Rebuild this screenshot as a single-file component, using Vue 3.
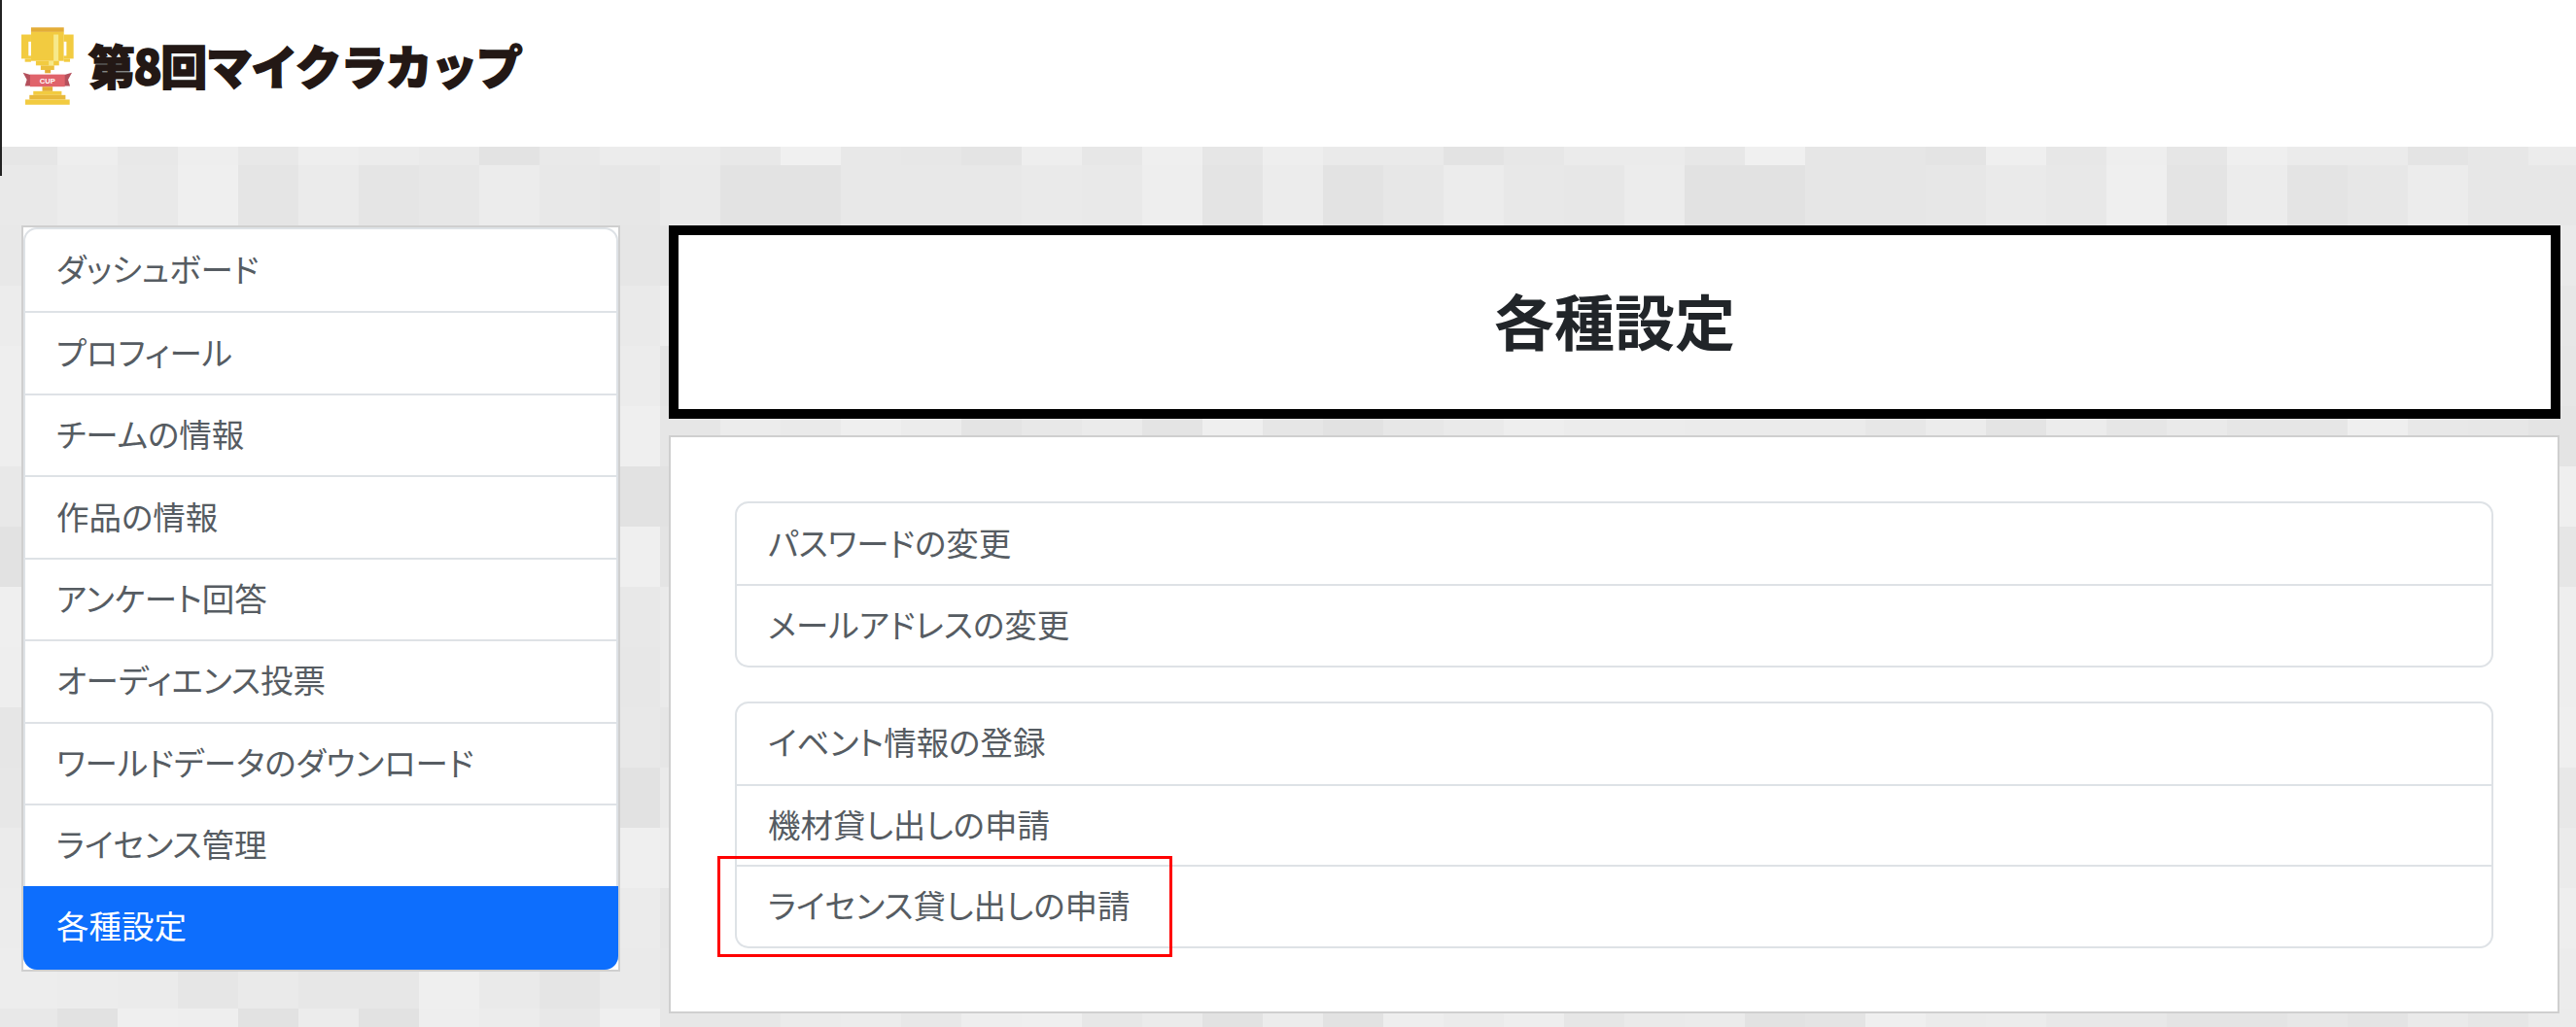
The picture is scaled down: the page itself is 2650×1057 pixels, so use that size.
<template>
  <div class="page">
    <header class="site-header">
      <svg class="trophy" viewBox="35 38 163 240" width="54" height="80">
        <rect x="65" y="38" width="102" height="14" fill="#e3ac37" />
        <rect x="65" y="52" width="102" height="90" fill="#f2cb40" />
        <rect x="80" y="142" width="72" height="14" fill="#f2cb40" />
        <rect x="95" y="156" width="42" height="14" fill="#ecc03c" />
        <rect x="35" y="60" width="30" height="75" fill="#f2cb40" />
        <rect x="167" y="60" width="30" height="75" fill="#f2cb40" />
        <rect x="46" y="135" width="19" height="10" fill="#f2cb40" />
        <rect x="167" y="135" width="19" height="10" fill="#f2cb40" />
        <rect x="57" y="82" width="8" height="44" fill="#fff" />
        <rect x="167" y="82" width="8" height="44" fill="#fff" />
        <rect x="135" y="60" width="15" height="82" fill="#f7e98a" />
        <rect x="120" y="142" width="15" height="14" fill="#f7e98a" />
        <rect x="108" y="170" width="18" height="10" fill="#e3ac37" />
        <polygon points="40,178 66,186 66,220 46,220 52,200" fill="#b4505c" />
        <polygon points="192,178 166,186 166,220 186,220 180,200" fill="#b4505c" />
        <rect x="62" y="184" width="108" height="38" fill="#e0636b" />
        <text x="116" y="211" class="cup-text" text-anchor="middle">CUP</text>
        <rect x="100" y="222" width="32" height="14" fill="#e3ac37" />
        <rect x="72" y="236" width="88" height="12" fill="#f2cb40" />
        <rect x="60" y="248" width="112" height="14" fill="#e8b93b" />
        <rect x="47" y="262" width="138" height="16" fill="#f2cb40" />
      </svg>
      <span class="logo-text">第8回マイクラカップ</span>
    </header>
    <div class="edge-line"></div>

    <main class="main">
      <svg class="mosaic" width="2666" height="992" shape-rendering="crispEdges">
        <template v-for="tile in tiles" :key="tile.key">
          <rect :x="tile.x" :y="tile.y" width="62" height="62" :fill="tile.fill" />
        </template>
      </svg>

      <aside class="sidebar">
        <ul class="list">
          <li
            v-for="item in menu"
            :key="item"
            class="list-item"
            :class="{ active: item === current }"
          >{{ item }}</li>
        </ul>
      </aside>

      <section class="content">
        <div class="title-box">
          <h1 class="title">{{ current }}</h1>
        </div>
        <div class="card">
          <ul v-for="(group, index) in groups" :key="index" class="list">
            <li v-for="item in group" :key="item" class="list-item">{{ item }}</li>
          </ul>
          <!-- annotation on the screenshot -->
          <div class="red-box"></div>
        </div>
      </section>
    </main>
  </div>
</template>

<script setup>
const current = '各種設定'

const menu = [
  'ダッシュボード',
  'プロフィール',
  'チームの情報',
  '作品の情報',
  'アンケート回答',
  'オーディエンス投票',
  'ワールドデータのダウンロード',
  'ライセンス管理',
  '各種設定'
]

const groups = [
  ['パスワードの変更', 'メールアドレスの変更'],
  ['イベント情報の登録', '機材貸し出しの申請', 'ライセンス貸し出しの申請']
]

// grey values of the rows that are really visible, the rest is filled below
const knownRows = {
  0: 'e6 ee e8 ee e8 ee ec ea e3 e9 ec eb e8 f0 e8 e7 e4 ee e7 ef e6 ee ea ea e3 e7 eb eb e7 f0 e6 e6 e4 ef e7 ee e6 ef eb eb e4 e7 ec',
  1: 'e9 ec e9 ef e5 eb e5 e7 ec e8 e7 ea e3 e3 e8 e8 e8 ea e9 ee e4 ec e3 e7 ec e8 e7 ec e2 e2 e6 e6 e7 ea e8 ef e4 ec e4 e7 ec e7 e7',
  13: 'ec e4 ea ea e2 ee ea e5 e4 e6 eb',
  14: 'ed ec eb e6 ea e7 e7 ef ea e5 ea'
}

const greys = ['e2', 'e4', 'e6', 'e7', 'e8', 'ea', 'eb', 'ec', 'ee', 'ef']

const tiles = []
for (let row = 0; row < 16; row++) {
  const known = knownRows[row] ? knownRows[row].split(' ') : []
  for (let col = 0; col < 43; col++) {
    const seed = Math.abs(Math.sin(row * 12.9898 + col * 78.233) * 43758.5453)
    const grey = known[col] || greys[Math.floor(seed) % greys.length]
    tiles.push({
      key: row + '-' + col,
      x: col * 62,
      y: row * 62,
      fill: '#' + grey + grey + grey
    })
  }
}
</script>

<style scoped>
.page {
  position: relative;
  height: 100vh;
  overflow: hidden;
  display: flex;
  flex-direction: column;
  background: #e8e8e8;
  font-family: "Noto Sans CJK JP", "Liberation Sans", sans-serif;
  color: #565c62;
}

.site-header {
  flex: none;
  height: 151px;
  box-sizing: border-box;
  padding: 28px 0 0 22px;
  background: #fff;
  display: flex;
  align-items: flex-start;
  position: relative;
  z-index: 2;
}

.trophy {
  flex: none;
}

.cup-text {
  font-family: "Liberation Sans", sans-serif;
  font-size: 23px;
  font-weight: 700;
  fill: #fff;
}

.logo-text {
  margin: 8px 0 0 15px;
  font-size: 48px;
  line-height: 60px;
  font-weight: 900;
  letter-spacing: -1.5px;
  color: #231815;
  -webkit-text-stroke: 1.5px #231815;
  white-space: nowrap;
}

.edge-line {
  position: absolute;
  left: 0;
  top: 0;
  width: 2px;
  height: 181px;
  background: #222;
  z-index: 3;
}

.main {
  position: relative;
  flex: 1;
  display: flex;
  align-items: flex-start;
  gap: 50px;
  padding: 81px 16px 0 22px;
}

.mosaic {
  position: absolute;
  left: -3.5px;
  top: -43px;
}

.sidebar {
  position: relative;
  flex: none;
  width: 616px;
  box-sizing: border-box;
  border: 2px solid #cfcfcf;
  background: #fff;
}

.list {
  margin: 0;
  padding: 0;
  list-style: none;
  background: #fff;
  border: 2px solid #dee2e6;
  border-radius: 14px;
}

.list-item {
  box-sizing: border-box;
  height: 84.44px;
  padding: 0 32px 5px;
  display: flex;
  align-items: center;
  font-size: 33.5px;
  font-feature-settings: "palt";
  border-top: 2px solid #dee2e6;
}

.list-item:first-child {
  border-top: none;
}

.list-item.active {
  height: 86.44px;
  margin: 0 -2px -2px;
  padding: 0 34px 7px;
  background: #0d6efd;
  border-top: none;
  border-radius: 0 0 14px 14px;
  color: #fff;
}

.content {
  position: relative;
  flex: 1;
  min-width: 0;
}

.title-box {
  box-sizing: border-box;
  height: 199px;
  padding-bottom: 6px;
  display: flex;
  align-items: center;
  justify-content: center;
  background: #fff;
  border: 10px solid #000;
}

.title {
  margin: 0;
  font-size: 62px;
  font-weight: 700;
  color: #212529;
}

.card {
  position: relative;
  margin: 17px 1px 0 0;
  padding: 66px 66px 65px;
  display: flex;
  flex-direction: column;
  gap: 35px;
  background: #fff;
  border: 2px solid #cfcfcf;
}

.card .list-item {
  height: 83.33px;
}

.red-box {
  position: absolute;
  left: 48px;
  top: 431px;
  width: 468px;
  height: 104px;
  box-sizing: border-box;
  border: 3px solid #f00;
}
</style>
